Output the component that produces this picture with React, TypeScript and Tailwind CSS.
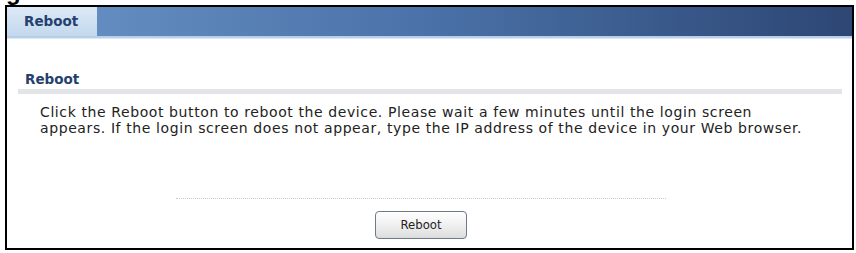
import React from 'react';

const App: React.FC = () => {
  return (
    <div className="w-[856px] h-[253px] bg-white relative overflow-hidden" style={{ fontFamily: '"DejaVu Sans", Verdana, sans-serif' }}>
      {/* descender of the heading above, cut off */}
      <div className="h-[5px] overflow-hidden pl-[6px]">
        <div className="-mt-[20px] text-[24px] leading-[24px] font-bold text-black" style={{ fontFamily: '"Liberation Sans", Arial, sans-serif' }}>g</div>
      </div>
      <div className="ml-[5px] w-[849px] h-[245px] border-[2px] border-black flex flex-col">
        <div className="flex h-[29px] bg-gradient-to-r from-[#6a93c7] via-[#4a72a8] to-[#2d4674]">
          <div className="w-[90px] bg-gradient-to-b from-[#dde9f6] to-[#c3d8ee] flex items-center pl-[17px]">
            <span className="text-[13.5px] font-bold text-[#24406e]">Reboot</span>
          </div>
        </div>
        <div className="h-[3px] bg-[#b8cfe9] border-b border-[#dfe9f5]"></div>
        <div className="pl-[11px] pr-[10px] pt-[31px]">
          <div className="pl-[7px] text-[13.5px] font-bold text-[#24406e] leading-[18px]">Reboot</div>
          <div className="h-[5px] bg-[#e3e4e7] mt-[1px]"></div>
          <p className="pl-[22px] pt-[10px] text-[14px] tracking-[0.6px] leading-[16px] text-[#222]">
            Click the Reboot button to reboot the device. Please wait a few minutes until the login screen
            <br />
            appears. If the login screen does not appear, type the IP address of the device in your Web browser.
          </p>
        </div>
        <div className="flex flex-col items-center pr-[17px] mt-[62px]">
          <div className="w-[490px] border-t border-dotted border-[#c8c8c8]"></div>
          <button className="mt-[12px] w-[92px] h-[28px] rounded-[4px] border border-[#6f7a86] bg-gradient-to-b from-white via-[#f0f0f0] to-[#dcdcdc] text-[13px] text-[#222]" style={{ fontFamily: 'Tahoma, "DejaVu Sans Condensed", "Liberation Sans", sans-serif' }}>
            Reboot
          </button>
        </div>
      </div>
    </div>
  );
};

export default App;
